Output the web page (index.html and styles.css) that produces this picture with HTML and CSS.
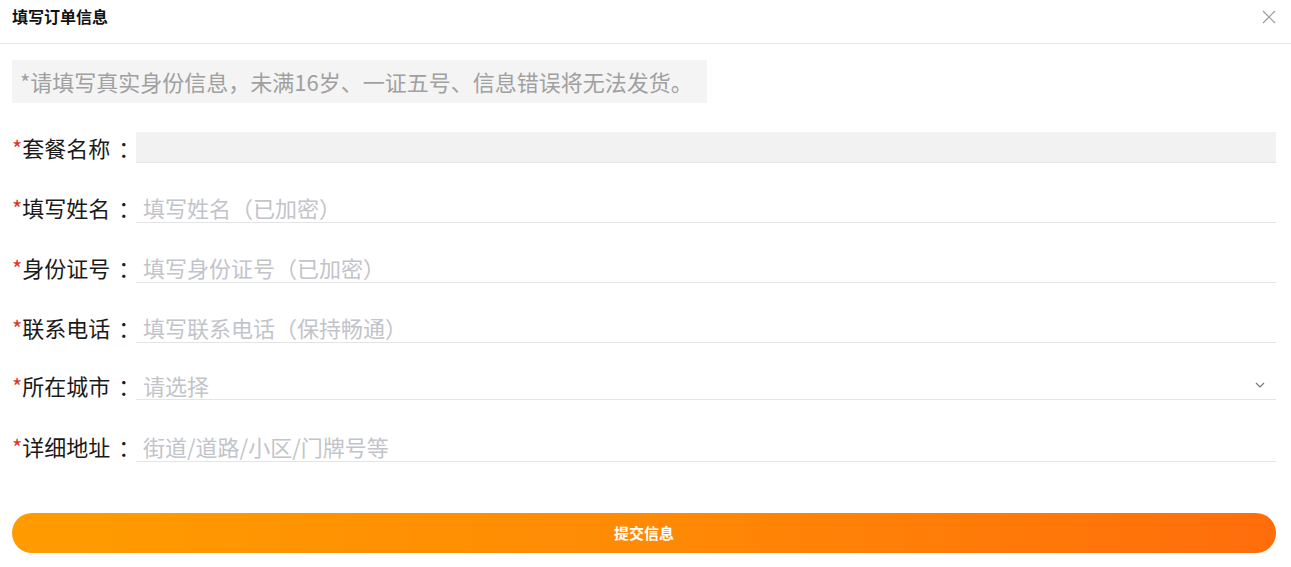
FILE: index.html
```html
<!DOCTYPE html>
<html lang="zh-CN">
<head>
<meta charset="utf-8">
<title>填写订单信息</title>
<link rel="stylesheet" href="styles.css">
</head>
<body>
<div class="dialog">
  <div class="header">
    <span class="title">填写订单信息</span>
    <svg class="close" width="14" height="14" viewBox="0 0 14 14"><path d="M1 1L13 13M13 1L1 13" stroke="#9a9a9a" stroke-width="1.2" fill="none"/></svg>
  </div>
  <div class="body">
    <div class="notice">*请填写真实身份信息，未满16岁、一证五号、信息错误将无法发货。</div>
    <div class="row">
      <label class="label"><span class="req">*</span>套餐名称<span class="colon">：</span></label>
      <div class="field field-disabled"></div>
    </div>
    <div class="row">
      <label class="label"><span class="req">*</span>填写姓名<span class="colon">：</span></label>
      <input class="field" type="text" placeholder="填写姓名（已加密）">
    </div>
    <div class="row">
      <label class="label"><span class="req">*</span>身份证号<span class="colon">：</span></label>
      <input class="field" type="text" placeholder="填写身份证号（已加密）">
    </div>
    <div class="row">
      <label class="label"><span class="req">*</span>联系电话<span class="colon">：</span></label>
      <input class="field" type="text" placeholder="填写联系电话（保持畅通）">
    </div>
    <div class="row row-select">
      <label class="label"><span class="req">*</span>所在城市<span class="colon">：</span></label>
      <div class="field select">
        <span class="ph">请选择</span>
        <svg class="chev" width="10" height="6" viewBox="0 0 10 6"><path d="M1 1L5 5L9 1" stroke="#777" stroke-width="1.2" fill="none"/></svg>
      </div>
    </div>
    <div class="row row-addr">
      <label class="label"><span class="req">*</span>详细地址<span class="colon">：</span></label>
      <input class="field" type="text" placeholder="街道/道路/小区/门牌号等">
    </div>
    <button class="submit" type="button">提交信息</button>
  </div>
</div>
</body>
</html>
```
FILE: styles.css
```css
* { box-sizing: border-box; }
html, body { margin: 0; padding: 0; background: #fff; }
body {
  font-family: "Microsoft YaHei", "Noto Sans CJK SC", "Noto Sans", sans-serif;
  color: #222;
}
.header {
  height: 44px;
  border-bottom: 1px solid #e8e8e8;
  display: flex;
  align-items: flex-start;
  justify-content: space-between;
  padding: 4px 15px 0 12px;
}
.title {
  font-size: 16px;
  font-weight: 700;
  line-height: 24px;
  color: #111;
}
.close { margin-top: 6px; }
.body {
  padding: 16px 15px 0 12px;
  display: flex;
  flex-direction: column;
}
.notice {
  align-self: flex-start;
  height: 43px;
  line-height: 43px;
  padding: 0 14px 0 8px;
  background: #f4f4f5;
  color: #a0a0a0;
  font-size: 22px;
  white-space: nowrap;
}
.row {
  display: flex;
  align-items: stretch;
  height: 31px;
  margin-top: 29px;
}
.row-select { height: 29px; margin-top: 28px; }
.row-addr { margin-top: 31px; }
.label {
  width: 124px;
  flex: none;
  font-size: 22px;
  line-height: 31px;
  color: #1a1a1a;
  white-space: nowrap;
}
.colon { padding-left: 8px; letter-spacing: -10px; }
.row-select .label { line-height: 29px; }
.req { color: #d9362b; }
.field {
  flex: 1;
  margin: 0;
  border: 0;
  border-bottom: 1px solid #e4e4e4;
  outline: none;
  background: #fff;
  font-family: inherit;
  font-size: 22px;
  color: #333;
  padding: 0 7px;
  height: 100%;
}
.field::placeholder { color: #c2c4ca; }
.field-disabled { background: #f2f2f2; }
.select {
  display: flex;
  align-items: center;
  justify-content: space-between;
  padding-right: 11px;
}
.ph { color: #c2c4ca; line-height: 29px; }
.submit {
  margin-top: 51px;
  height: 40px;
  border: 0;
  border-radius: 20px;
  background: linear-gradient(90deg, #ff9c00 0%, #ff8a05 50%, #ff6d0b 100%);
  color: #fff;
  font-family: inherit;
  font-size: 15px;
  font-weight: 700;
  padding: 0 0 2px;
  cursor: pointer;
}
```
